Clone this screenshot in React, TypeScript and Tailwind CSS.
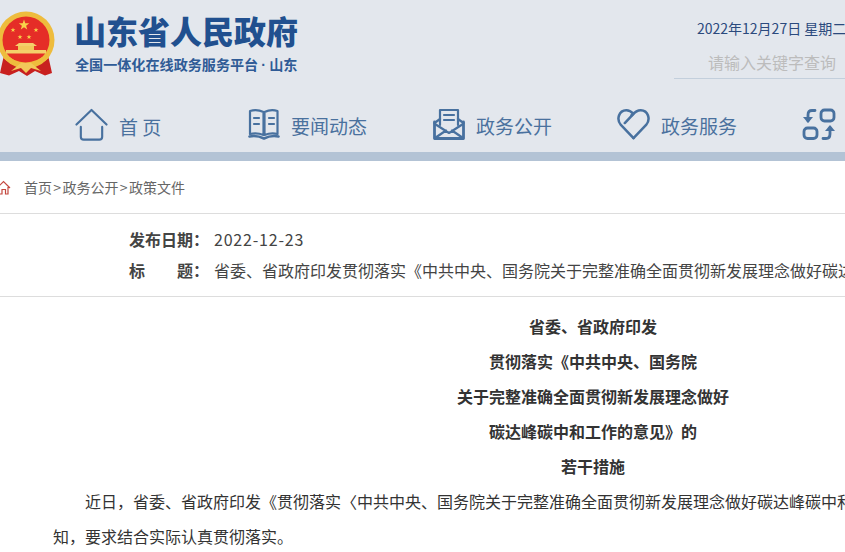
const font = { fontFamily: '"Noto Sans CJK SC", "Noto Sans", sans-serif' };

function Emblem() {
  const star = (cx: number, cy: number, r: number) => {
    const pts: string[] = [];
    for (let i = 0; i < 10; i++) {
      const a = -Math.PI / 2 + (i * Math.PI) / 5;
      const rr = i % 2 === 0 ? r : r * 0.4;
      pts.push(`${cx + rr * Math.cos(a)},${cy + rr * Math.sin(a)}`);
    }
    return <polygon points={pts.join(' ')} fill="#f8d24a" />;
  };
  return (
    <svg width="60" height="66" viewBox="0 0 60 66" className="shrink-0 ml-[-3px]">
      <path d="M7 44 L3 62 L12 64.500 L22 60 L30 65 L38 60 L48 64.500 L55 62 L51 44 Z" fill="#c8201f" />
      <circle cx="29" cy="29" r="28.500" fill="#eebc3d" />
      <circle cx="29" cy="29" r="23.500" fill="#e52d27" />
      {star(27, 14, 5.500)}
      {star(16, 19, 2.600)}
      {star(39, 19, 2.600)}
      {star(23, 26, 2.600)}
      {star(32, 26, 2.600)}
      <path d="M18 35 L22 32 H36 L40 35 Z" fill="#f4cf6a" />
      <rect x="21" y="35" width="16" height="4" fill="#f2c85a" />
      <rect x="9" y="39" width="40" height="3.500" fill="#f4cf6a" />
      <path d="M6 41 Q28 62 52 41 L52 47 Q28 66 6 47 Z" fill="#eebc3d" />
      <path d="M14 60 L24 52 H34 L44 60 L34 57 L29 62 L24 57 Z" fill="#f2c85a" />
    </svg>
  );
}

const ic = { fill: 'none', stroke: '#48719f', strokeWidth: 2.2, strokeLinecap: 'round' as const, strokeLinejoin: 'round' as const };

function HomeI() {
  return (
    <svg width="33" height="34" viewBox="0 0 34 34" {...ic} className="shrink-0">
      <path d="M1.500 16.500 L17 1.500 L32.500 16.500" />
      <path d="M6 19 V29 Q6 32 9 32 H25 Q28 32 28 29 V19" />
    </svg>
  );
}
function BookI() {
  return (
    <svg width="32" height="32" viewBox="0 0 32 32" {...ic} className="shrink-0">
      <path d="M2 3 Q9 1 15.500 4 V27 Q9 24.500 2 26 Z" />
      <path d="M29.500 3 Q23 1 16.500 4 V27 Q23 24.500 29.500 26 Z" />
      <path d="M6 10 H11 M6 16 H11 M21 10 H26 M21 16 H26" />
      <path d="M1.500 28.500 Q9 27 16 30.500 Q23 27 30.500 28.500" strokeWidth="2.600" />
    </svg>
  );
}
function MailI() {
  return (
    <svg width="32" height="32" viewBox="0 0 32 32" {...ic} className="shrink-0">
      <path d="M1.500 15 L7 11 M30.500 15 L25 11" />
      <path d="M1.500 14 V30.500 H30.500 V14" strokeWidth="2.800" />
      <path d="M7 17 V2 H25 V17" />
      <path d="M11 7 H21 M11 12 H21" />
      <path d="M2 16 L16 25 L30 16 M2 30 L13 22.500 M30 30 L19 22.500" />
    </svg>
  );
}
function HeartI() {
  return (
    <svg width="33" height="32" viewBox="0 0 34 32" {...ic} className="shrink-0" strokeWidth="2.600">
      <path d="M17 30.500 L4 17 C-1 11 2 2 9.500 1.800 C13 1.700 15 3.500 17 5.500 L8 15" />
      <path d="M17 30.500 L30 17 C35 11 32 2 24.500 1.800 C21 1.700 18.500 3.500 15 7" />
    </svg>
  );
}
function SwapI() {
  return (
    <svg width="34" height="32" viewBox="0 0 34 32" {...ic} className="shrink-0" strokeWidth="2.800">
      <rect x="19" y="2" width="13" height="11" rx="3.500" />
      <rect x="2" y="20" width="13" height="10.500" rx="3.500" />
      <path d="M13 2.500 H10 Q6 2.500 6 7 V13" />
      <path d="M1 9 H11 L6 15 Z" fill="#48719f" stroke="none" />
      <path d="M21 30.500 H24 Q28 30.500 28 26 V20" />
      <path d="M23 23 H33 L28 17 Z" fill="#48719f" stroke="none" />
    </svg>
  );
}

function NavItem({ icon, label, w }: { icon: React.ReactNode; label?: string; w: string }) {
  return (
    <div className={`flex items-center gap-[11px] shrink-0 ${w}`}>
      {icon}
      {label && <span className="text-[19px] leading-none pt-[3px] text-[#4a719e] whitespace-nowrap">{label}</span>}
    </div>
  );
}

function Gt() {
  return <span className="inline-block w-[10.500px] text-center">&gt;</span>;
}

export default function App() {
  return (
    <div className="w-[845px] h-[552px] overflow-hidden bg-white" style={font}>
      <header className="h-[152px] bg-[#e3e7ed] flex flex-col overflow-hidden">
        <div className="h-[96px] flex justify-between shrink-0">
          <div className="flex items-start pt-[11px] gap-[18px]">
            <Emblem />
            <div className="mt-[-1px]">
              <div className="text-[32px] leading-[40px] font-black text-[#21508f] whitespace-nowrap ml-[-1px]">山东省人民政府</div>
              <div className="text-[14.100px] leading-[18px] mt-[5px] font-bold text-[#2f5b96] whitespace-nowrap">全国一体化在线政务服务平台<span className="inline-block w-[11px] text-center font-['Liberation_Sans']">·</span>山东</div>
            </div>
          </div>
          <div className="w-[171px] shrink-0 pt-[19px]">
            <div className="pl-[23px] text-[14px] leading-[18px] text-[#2b4a7d] whitespace-nowrap">2022年12月27日 星期二</div>
            <div className="mt-[7px] h-[35px] border-b border-[#c3cfdc] pl-[34px] text-[16px] leading-[36px] text-[#bcbcbc] whitespace-nowrap">请输入关键字查询</div>
          </div>
        </div>
        <nav className="flex items-start pl-[75px] pt-[12px]">
          <NavItem icon={<HomeI />} label="首 页" w="w-[173px]" />
          <NavItem icon={<BookI />} label="要闻动态" w="w-[185px]" />
          <NavItem icon={<MailI />} label="政务公开" w="w-[184px]" />
          <NavItem icon={<HeartI />} label="政务服务" w="w-[185px]" />
          <NavItem icon={<SwapI />} w="w-[50px]" />
        </nav>
      </header>
      <div className="h-[9px] bg-[#b3c3d5]" />
      <div className="h-[53px] border-b border-[#dddddd] flex items-center text-[14px] text-[#666666] gap-[13px] ml-[-4px]">
        <svg width="15" height="15" viewBox="0 0 15 15" fill="none" stroke="#c4483f" strokeWidth="1.200" className="shrink-0">
          <path d="M1 8 L7.500 1.500 L14 8 M3 7 V14 H6 V9.500 H9.500 V14 H12 V7" />
        </svg>
        <span className="whitespace-nowrap">首页<Gt />政务公开<Gt />政策文件</span>
      </div>
      <div className="h-[83px] border-b border-[#dddddd] pl-[129px] pt-[10px] text-[16px] leading-[31px] text-[#444444]">
        <div className="flex">
          <span className="w-[85px] font-bold shrink-0">发布日期：</span>
          <span className="whitespace-nowrap tracking-[0.800px]">2022-12-23</span>
        </div>
        <div className="flex">
          <span className="w-[85px] font-bold shrink-0 flex"><span className="w-[48px]">标</span><span>题：</span></span>
          <span className="whitespace-nowrap">省委、省政府印发贯彻落实《中共中央、国务院关于完整准确全面贯彻新发展理念做好碳达峰碳中和工作的意见》的若干措施</span>
        </div>
      </div>
      <article className="w-[1080px] ml-[53px] pt-[12px] text-[16px] leading-[35px] text-[#333333]">
        <div className="text-center font-bold">
          <p>省委、省政府印发</p>
          <p>贯彻落实《中共中央、国务院</p>
          <p>关于完整准确全面贯彻新发展理念做好</p>
          <p>碳达峰碳中和工作的意见》的</p>
          <p>若干措施</p>
        </div>
        <p className="w-[792px] indent-[32px] overflow-hidden h-[70px]">
          <span className="block whitespace-nowrap">近日，省委、省政府印发《贯彻落实〈中共中央、国务院关于完整准确全面贯彻新发展理念做好碳达峰碳中和工作的意见〉的若干措施》，并发出通</span>
          <span className="block whitespace-nowrap indent-0">知，要求结合实际认真贯彻落实。</span>
        </p>
      </article>
    </div>
  );
}
